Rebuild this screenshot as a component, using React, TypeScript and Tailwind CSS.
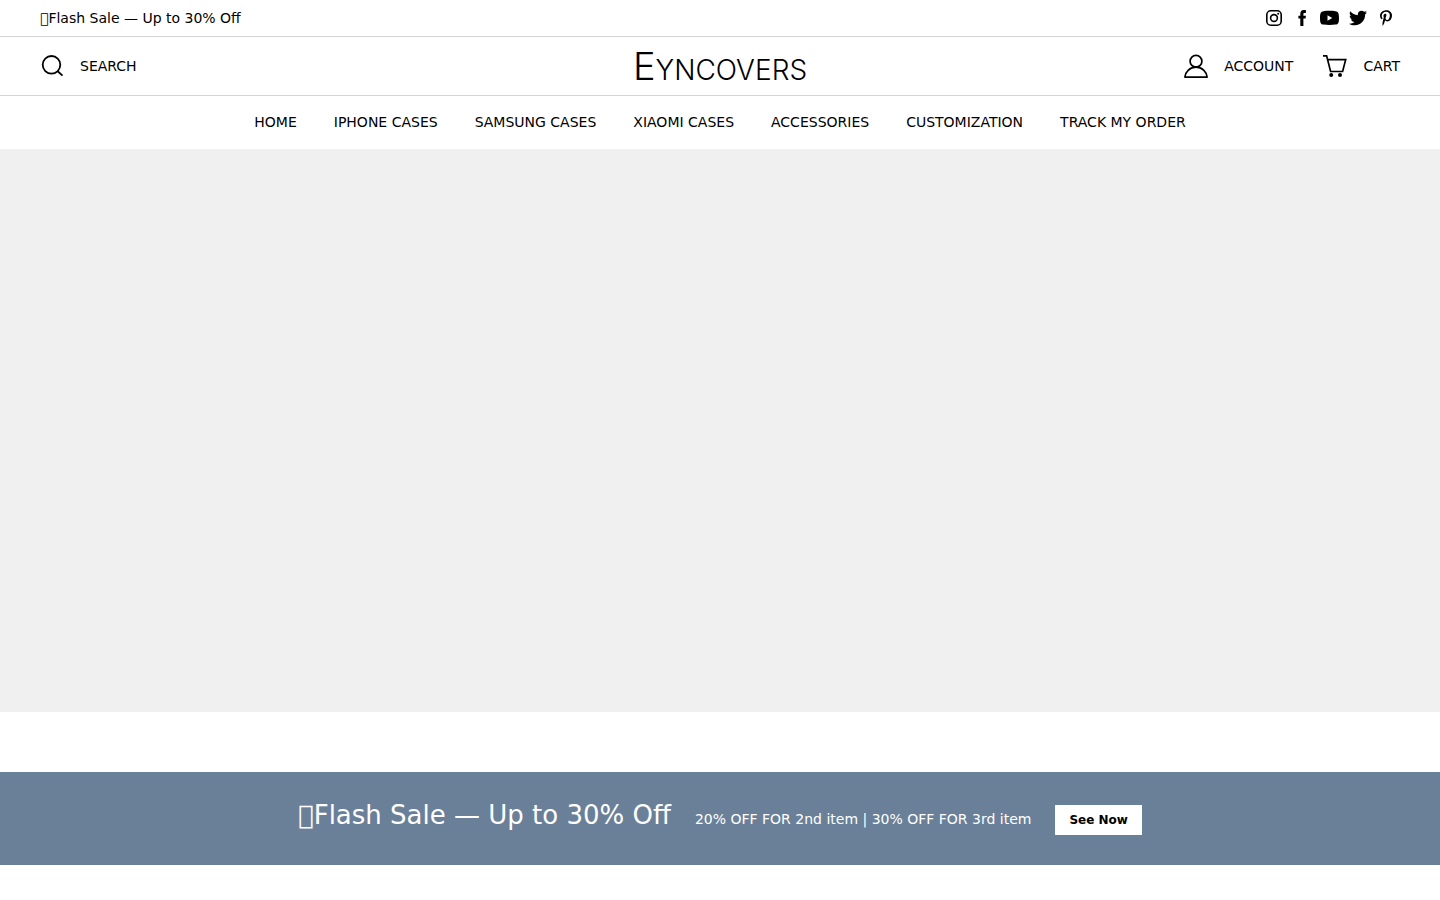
import type { ReactNode } from "react";
import { FaPinterestP, FaTwitter } from "react-icons/fa";

const NAV_LINKS = [
  "Home",
  "iPhone Cases",
  "Samsung Cases",
  "Xiaomi Cases",
  "Accessories",
  "Customization",
  "Track My Order",
];

const SALE_TITLE = "\u{F0000}Flash Sale — Up to 30% Off";

function InstagramIcon() {
  return (
    <svg width="18" height="18" viewBox="0 0 18 18" fill="none" stroke="currentColor">
      <rect x="1.8" y="1.8" width="14.4" height="14.4" rx="4" strokeWidth="1.6" />
      <circle cx="9" cy="9" r="3.4" strokeWidth="1.6" />
      <circle cx="13.2" cy="4.8" r="1" fill="currentColor" stroke="none" />
    </svg>
  );
}

function FacebookIcon() {
  return (
    <svg width="18" height="18" viewBox="0 0 18 18" fill="currentColor">
      <path d="M7.3 17V9.600H5.400V6.800h1.900V4.900C7.300 2.300 8.400 1 10.900 1h2v2.900h-1.300c-1 0-1.200.4-1.200 1.300v1.600h2.500l-.3 2.800h-2.200V17z" />
    </svg>
  );
}

function YoutubeIcon() {
  return (
    <svg width="20" height="18" viewBox="0 0 20 18">
      <path
        fill="currentColor"
        fillRule="evenodd"
        d="M3.500 2.200C7 1.700 12 1.700 15.500 2.200 18.200 2.500 19 4 19 9s-.8 6.300-3.500 6.600c-3.500.5-8.500.5-12 0C.8 15.300 0 14 0 9s.8-6.500 3.500-6.800zM7.500 6.200v5.600L12.300 9z"
      />
    </svg>
  );
}

function SearchIcon() {
  return (
    <svg width="24" height="24" viewBox="0 0 24 24" fill="none" stroke="currentColor" strokeWidth="1.8">
      <circle cx="11.500" cy="10.800" r="8.800" />
      <path d="M17.500 17l5 4.600" />
    </svg>
  );
}

function AccountIcon() {
  return (
    <svg width="26" height="26" viewBox="0 0 26 26" fill="none" stroke="currentColor" strokeWidth="1.7">
      <circle cx="14" cy="8.300" r="5.900" />
      <path d="M2.900 24.100c.5-5.500 5-9.900 11.100-9.900s10.600 4.400 11.100 9.900z" strokeLinejoin="round" />
    </svg>
  );
}

function CartIcon() {
  return (
    <svg width="26" height="26" viewBox="0 0 26 26" fill="none" stroke="currentColor" strokeWidth="1.7">
      <path d="M2 2.900h3.600l4 15.600h12L24.700 6.600H6.500" />
      <circle cx="10.200" cy="22" r="2" fill="currentColor" stroke="none" />
      <circle cx="19" cy="22" r="2" fill="currentColor" stroke="none" />
    </svg>
  );
}

const SOCIALS: { label: string; icon: ReactNode }[] = [
  { label: "Instagram", icon: <InstagramIcon /> },
  { label: "Facebook", icon: <FacebookIcon /> },
  { label: "YouTube", icon: <YoutubeIcon /> },
  { label: "Twitter", icon: <FaTwitter size={18} /> },
  { label: "Pinterest", icon: <FaPinterestP size={16} /> },
];

function TopBar() {
  return (
    <div className="flex items-center justify-between border-b border-[#d4d4d4] h-[37px] px-10">
      <p className="text-[14px] leading-5">{SALE_TITLE}</p>
      <div className="flex items-center gap-2 pr-1">
        {SOCIALS.map((s) => (
          <a key={s.label} href="#" aria-label={s.label} className="flex w-5 justify-center">
            {s.icon}
          </a>
        ))}
      </div>
    </div>
  );
}

function Header() {
  return (
    <header className="grid grid-cols-[1fr_auto_1fr] items-center border-b border-[#d4d4d4] h-[59px] px-10 text-[14px]">
      <button type="button" className="flex items-center gap-4 justify-self-start uppercase">
        <SearchIcon />
        Search
      </button>
      <a
        href="#"
        aria-label="Eyncovers"
        className="flex items-baseline pt-[3px] font-[Inter,sans-serif] font-light text-[28px] leading-10"
      >
        <span className="text-[38px]">E</span>
        <span>YNCOVERS</span>
      </a>
      <div className="flex items-center gap-7 justify-self-end">
        <a href="#" className="flex items-center gap-4 uppercase">
          <AccountIcon />
          Account
        </a>
        <a href="#" className="flex items-center gap-4 uppercase">
          <CartIcon />
          Cart
        </a>
      </div>
    </header>
  );
}

export default function App() {
  return (
    <div className="bg-white text-black font-['DejaVu_Sans',sans-serif]">
      <TopBar />
      <Header />
      <nav className="flex items-center justify-center gap-[37px] h-[53px] text-[14px]">
        {NAV_LINKS.map((link) => (
          <a key={link} href="#" className="uppercase">
            {link}
          </a>
        ))}
      </nav>

      <main>
        <section className="bg-[#f0f0f0] aspect-[1440/563]" />

        <section className="mt-[60px] flex flex-wrap items-baseline justify-center gap-6 bg-[#6a8099] py-[30px] text-white">
          <h2 className="text-[26px] leading-[26px]">{SALE_TITLE}</h2>
          <p className="text-[14px] leading-5">20% OFF FOR 2nd item | 30% OFF FOR 3rd item</p>
          <a href="#" className="bg-white px-3.5 py-[7px] text-[12px] leading-4 font-bold text-black">
            See Now
          </a>
        </section>
      </main>
    </div>
  );
}
